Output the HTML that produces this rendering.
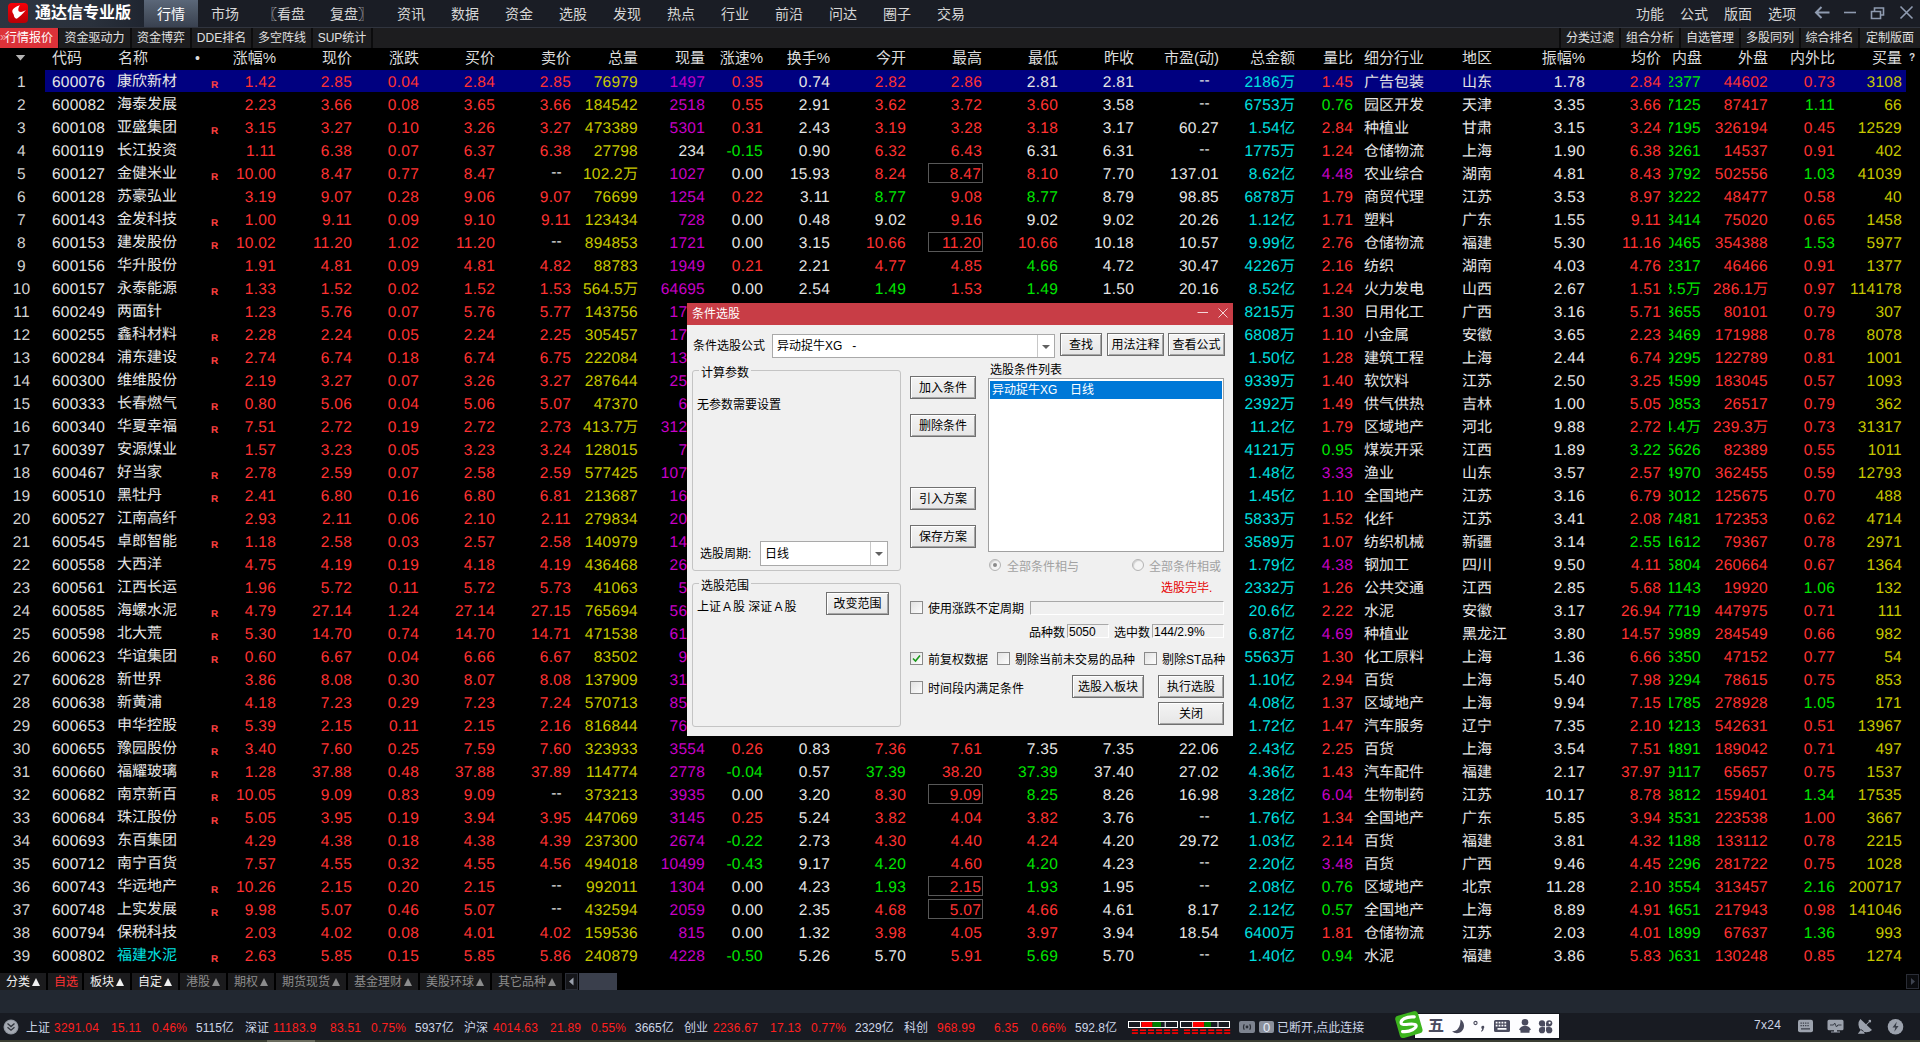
<!DOCTYPE html>
<html lang="zh-CN">
<head>
<meta charset="utf-8">
<title>通达信专业版</title>
<style>
html,body{margin:0;padding:0;background:#000;}
body{width:1920px;height:1042px;position:relative;overflow:hidden;font-family:"Liberation Sans","Noto Sans CJK SC",sans-serif;color:#e6e6e6;}
i,b{font-style:normal;font-weight:normal}
.abs{position:absolute}
/* ---------- top bar ---------- */
#top{position:absolute;left:0;top:0;width:1920px;height:27px;background:linear-gradient(90deg,#2d3440 0,#2a313c 90px,#1f2530 144px,#1a1d25 200px,#1a1d25 100%);border-bottom:1px solid #30343e;}
#top .act{position:absolute;left:144px;top:0;width:54px;height:27px;background:linear-gradient(180deg,#5b6779 0,#4a5463 50%,#394150 100%);}
#top .ttl{position:absolute;left:35px;top:0;line-height:25px;font-size:16px;font-weight:bold;color:#fff;letter-spacing:0px}
#top .mi{position:absolute;top:0;line-height:28px;font-size:14px;color:#d6d6d6;white-space:nowrap}
#logo{position:absolute;left:8px;top:3px;width:20px;height:20px}
/* ---------- second bar ---------- */
#bar2{position:absolute;left:0;top:28px;width:1920px;height:20px;background:#1d1d1f;}
#bar2 i{position:absolute;top:0;height:20px;line-height:21px;font-size:12px;color:#e0e0e0;text-align:center;white-space:nowrap;border-right:2px solid #0c0c0d;box-sizing:border-box}
#bar2 i.on{background:#dc3239;color:#fff;border-right:none}
/* ---------- header ---------- */
#hd{position:absolute;left:0;top:48px;width:1920px;height:22px;background:#000}
#hd i{position:absolute;top:0;line-height:20px;font-size:15px;color:#dcdcdc;white-space:nowrap}
/* ---------- rows ---------- */
.row{position:absolute;left:0;width:1920px;height:23px;line-height:23px;font-size:15.5px;letter-spacing:.25px;text-rendering:geometricPrecision;white-space:nowrap}
.row.sel:before{content:"";position:absolute;left:45px;top:0;width:1861px;height:22px;background:#000080}
.row>i{position:absolute;top:1px}
.row b{font-size:15px;letter-spacing:0}
.ix{left:0;width:43px;text-align:center;color:#d2d2d2}
.cd{left:52px;color:#e6e6e6}
.nm{left:117px;top:0 !important;font-size:15px;letter-spacing:0;color:#e6e6e6}
.nm.cy{color:#00e0e0}
.R{left:211px;font-size:10px;font-weight:bold;color:#ff4040;top:4px !important}
.hy{left:1364px;font-size:15px;letter-spacing:0;color:#e6e6e6}
.dq{left:1462px;font-size:15px;letter-spacing:0;color:#e6e6e6}
.np{left:1669px;width:32px;height:23px;overflow:hidden;top:0 !important}
.np>i{position:absolute;right:0;top:1px}
.bx{left:928px;top:1px !important;width:53px;height:18px;border:1px solid #585858}
.bx+.zg{margin-right:1px}
.dd{margin-right:9px;top:-1px !important}
.r{color:#ff3232}.g{color:#00e600}.y{color:#c8c800}.m{color:#c800c8}.c{color:#00e0e0}.w{color:#e6e6e6}

/* window controls */
#wc{position:absolute;left:1810px;top:0;width:110px;height:27px}
/* bottom tabs */
#bt{position:absolute;left:0;top:973px;width:1920px;height:17px;background:#000}
#bt i{position:absolute;top:0;height:17px;line-height:19px;font-size:12px;color:#f0f0f0;background:#1b1b1d;white-space:nowrap;box-sizing:border-box;padding-left:6px;overflow:hidden}
#bt i.d{color:#8c8c8c}
#bt i.s{color:#ff3232}
#bt i u{text-decoration:none;display:inline-block;width:0;height:0;border-left:4.5px solid transparent;border-right:4.5px solid transparent;border-bottom:8px solid currentColor;margin-left:2px;vertical-align:0px}
#band{position:absolute;left:0;top:990px;width:1920px;height:23px;background:#222831}
#sb{position:absolute;left:0;top:1013px;width:1920px;height:27px;background:#181b22}
#sb i{position:absolute;top:0;line-height:31px;font-size:12px;white-space:nowrap;color:#ccd6e8}
#sb i.r{color:#ff2020;letter-spacing:.25px}
#foot{position:absolute;left:0;top:1040px;width:1920px;height:2px;background:#3b3f33}
/* dialog */
#dlg{position:absolute;left:687px;top:303px;width:546px;height:433px;background:#f0f0f0;font-size:12px;color:#000;font-family:"Liberation Sans","Noto Sans CJK SC",sans-serif}
#dlg .tb{position:absolute;left:0;top:0;width:546px;height:22px;background:#c83d46}
#dlg .tb span{position:absolute;left:5px;top:0;line-height:23px;color:#fff;font-size:12px}
#dlg .t{position:absolute;line-height:16px;white-space:nowrap;margin-top:1px}
#dlg .btn{position:absolute;box-sizing:border-box;height:23px;line-height:22px;text-align:center;background:linear-gradient(#f4f4f4,#e6e6e6);border:1px solid #707070;box-shadow:inset 1px 1px 0 #fff,inset -1px -1px 0 #a6a6a6;white-space:nowrap}
#dlg .cb{position:absolute;box-sizing:border-box;background:#fff;border:1px solid #a9a9a9;line-height:23px;padding-left:4px;white-space:nowrap}
#dlg .cb:after{content:"";position:absolute;right:0;top:0;width:16px;height:100%;border-left:1px solid #c8c8c8}
#dlg .cb:before{content:"";position:absolute;right:4px;top:10px;border-left:4px solid transparent;border-right:4px solid transparent;border-top:4px solid #606060}
#dlg .gb{position:absolute;box-sizing:border-box;border:1px solid #c4c4c4;border-radius:3px}
#dlg .gb span{position:absolute;left:6px;top:-6px;background:#f0f0f0;padding:0 2px;line-height:16px}
#dlg .ck{position:absolute;box-sizing:border-box;width:13px;height:13px;border:1px solid #8a8a8a;background:linear-gradient(135deg,#e2e2e2,#fdfdfd)}
#dlg .sk{position:absolute;box-sizing:border-box;height:14px;line-height:15px;border:1px solid;border-color:#a8a8a8 #fff #fff #a8a8a8;padding-left:1px;white-space:nowrap}
#dlg .rd{position:absolute;box-sizing:border-box;width:12px;height:12px;border-radius:50%;border:1px solid #b4b4b4;background:#f4f4f4;box-shadow:inset 1px 1px 1px #d0d0d0}
.zf{right:1644px}.xj{right:1568px}.zd{right:1501px}.mj{right:1425px}.sj{right:1349px}.zl{right:1282px}.xl{right:1215px}.zs{right:1157px}.hs{right:1090px}.jk{right:1014px}.zg{right:938px}.zdi{right:862px}.zsou{right:786px}.sy{right:701px}.je{right:625px}.lb{right:567px}.zfu{right:335px}.jj{right:259px}.wp{right:152px}.nwb{right:85px}.ml{right:18px}
</style>
</head>
<body>
<div id="top">
<div class="act"></div>
<div id="logo" style="border-radius:4px;background:linear-gradient(180deg,#f80008,#b80006)"><svg width="20" height="20" viewBox="0 0 20 20" style="position:absolute;left:0;top:0"><path d="M11.900 2.200 C8 3.500 4.500 5.500 4.300 8 C4.200 10 5.500 10.500 5.800 12 C6 13.500 6.500 15.500 8.800 15.800 C11 14.500 15 11 17.900 7.100 C15.500 8.800 12.500 9.500 10.700 8.300 C9.800 6.500 10.500 4 11.900 2.200 Z" fill="#fff"/></svg></div>
<span class="ttl">通达信专业版</span>
<span class="mi" style="left:157px;color:#fff">行情</span>
<span class="mi" style="left:211px">市场</span>
<span class="mi" style="left:263px">〖看盘</span>
<span class="mi" style="left:330px">复盘〗</span>
<span class="mi" style="left:397px">资讯</span>
<span class="mi" style="left:451px">数据</span>
<span class="mi" style="left:505px">资金</span>
<span class="mi" style="left:559px">选股</span>
<span class="mi" style="left:613px">发现</span>
<span class="mi" style="left:667px">热点</span>
<span class="mi" style="left:721px">行业</span>
<span class="mi" style="left:775px">前沿</span>
<span class="mi" style="left:829px">问达</span>
<span class="mi" style="left:883px">圈子</span>
<span class="mi" style="left:937px">交易</span>
<span class="mi" style="left:1636px">功能</span>
<span class="mi" style="left:1680px">公式</span>
<span class="mi" style="left:1724px">版面</span>
<span class="mi" style="left:1768px">选项</span>
<svg id="wc" width="110" height="27" viewBox="0 0 110 27"><g stroke="#8f9bb0" stroke-width="1.6" fill="none"><path d="M6 12.5H19.5M11.500 7L6 12.500L11.500 18" stroke-width="2"/><path d="M34 12.5H46"/><path d="M61.5 11.5h9v7h-9z M64.5 11.5v-3.5h9v7h-3"/><path d="M90.5 6.5L102.5 18.5M102.5 6.5L90.5 18.5"/></g></svg>
</div>
<div id="bar2">
<i class="on" style="left:0;width:58px;text-align:left;padding-left:5px"><b style="position:absolute;left:0;top:-1px;font-size:12px;color:#f4a0a4">»</b>行情报价</i>
<i style="left:58px;width:74px;border-left:1px solid #0c0c0d">资金驱动力</i>
<i style="left:132px;width:60px">资金博弈</i>
<i style="left:192px;width:61px">DDE排名</i>
<i style="left:253px;width:60px">多空阵线</i>
<i style="left:313px;width:60px">SUP统计</i>
<i style="left:1559px;width:62px;border-left:2px solid #0c0c0d">分类过滤</i>
<i style="left:1621px;width:60px">组合分析</i>
<i style="left:1681px;width:60px">自选管理</i>
<i style="left:1741px;width:60px">多股同列</i>
<i style="left:1801px;width:59px">综合排名</i>
<i style="left:1860px;width:60px;border-right:none">定制版面</i>
</div>
<div id="hd"><svg width="12" height="8" viewBox="0 0 12 8" style="position:absolute;left:15px;top:6px"><path d="M.8 1H10.200L5.500 6.400Z" fill="#b4b4b4"/></svg><i style="left:195px;font-size:14px">•</i><i style="left:1909px;font-size:10px;font-weight:bold">?</i><i style="left:52px">代码</i><i style="left:118px">名称</i><i style="right:1644px">涨幅%</i><i style="right:1568px">现价</i><i style="right:1501px">涨跌</i><i style="right:1425px">买价</i><i style="right:1349px">卖价</i><i style="right:1282px">总量</i><i style="right:1215px">现量</i><i style="right:1157px">涨速%</i><i style="right:1090px">换手%</i><i style="right:1014px">今开</i><i style="right:938px">最高</i><i style="right:862px">最低</i><i style="right:786px">昨收</i><i style="right:701px">市盈(动)</i><i style="right:625px">总金额</i><i style="right:567px">量比</i><i style="left:1364px">细分行业</i><i style="left:1462px">地区</i><i style="right:335px">振幅%</i><i style="right:259px">均价</i><i style="right:218px">内盘</i><i style="right:152px">外盘</i><i style="right:85px">内外比</i><i style="right:18px">买量</i></div>
<div class="row sel" style="top:70px"><i class="ix">1</i><i class="cd">600076</i><i class="nm">康欣新材</i><i class="R">R</i><i class="n zf r">1.42</i><i class="n xj r">2.85</i><i class="n zd r">0.04</i><i class="n mj r">2.84</i><i class="n sj r">2.85</i><i class="n zl y">76979</i><i class="n xl m">1497</i><i class="n zs r">0.35</i><i class="n hs w">0.74</i><i class="n jk r">2.82</i><i class="n zg r">2.86</i><i class="n zdi w">2.81</i><i class="n zsou w">2.81</i><i class="n sy w dd">--</i><i class="n je c">2186<b>万</b></i><i class="n lb r">1.45</i><i class="hy">广告包装</i><i class="dq">山东</i><i class="n zfu w">1.78</i><i class="n jj r">2.84</i><i class="np"><i class="n g">32377</i></i><i class="n wp r">44602</i><i class="n nwb r">0.73</i><i class="n ml y">3108</i></div>
<div class="row" style="top:93px"><i class="ix">2</i><i class="cd">600082</i><i class="nm">海泰发展</i><i class="n zf r">2.23</i><i class="n xj r">3.66</i><i class="n zd r">0.08</i><i class="n mj r">3.65</i><i class="n sj r">3.66</i><i class="n zl y">184542</i><i class="n xl m">2518</i><i class="n zs r">0.55</i><i class="n hs w">2.91</i><i class="n jk r">3.62</i><i class="n zg r">3.72</i><i class="n zdi r">3.60</i><i class="n zsou w">3.58</i><i class="n sy w dd">--</i><i class="n je c">6753<b>万</b></i><i class="n lb g">0.76</i><i class="hy">园区开发</i><i class="dq">天津</i><i class="n zfu w">3.35</i><i class="n jj r">3.66</i><i class="np"><i class="n g">97125</i></i><i class="n wp r">87417</i><i class="n nwb g">1.11</i><i class="n ml y">66</i></div>
<div class="row" style="top:116px"><i class="ix">3</i><i class="cd">600108</i><i class="nm">亚盛集团</i><i class="R">R</i><i class="n zf r">3.15</i><i class="n xj r">3.27</i><i class="n zd r">0.10</i><i class="n mj r">3.26</i><i class="n sj r">3.27</i><i class="n zl y">473389</i><i class="n xl m">5301</i><i class="n zs r">0.31</i><i class="n hs w">2.43</i><i class="n jk r">3.19</i><i class="n zg r">3.28</i><i class="n zdi r">3.18</i><i class="n zsou w">3.17</i><i class="n sy w">60.27</i><i class="n je c">1.54<b>亿</b></i><i class="n lb r">2.84</i><i class="hy">种植业</i><i class="dq">甘肃</i><i class="n zfu w">3.15</i><i class="n jj r">3.24</i><i class="np"><i class="n g">147195</i></i><i class="n wp r">326194</i><i class="n nwb r">0.45</i><i class="n ml y">12529</i></div>
<div class="row" style="top:139px"><i class="ix">4</i><i class="cd">600119</i><i class="nm">长江投资</i><i class="n zf r">1.11</i><i class="n xj r">6.38</i><i class="n zd r">0.07</i><i class="n mj r">6.37</i><i class="n sj r">6.38</i><i class="n zl y">27798</i><i class="n xl w">234</i><i class="n zs g">-0.15</i><i class="n hs w">0.90</i><i class="n jk r">6.32</i><i class="n zg r">6.43</i><i class="n zdi w">6.31</i><i class="n zsou w">6.31</i><i class="n sy w dd">--</i><i class="n je c">1775<b>万</b></i><i class="n lb r">1.24</i><i class="hy">仓储物流</i><i class="dq">上海</i><i class="n zfu w">1.90</i><i class="n jj r">6.38</i><i class="np"><i class="n g">13261</i></i><i class="n wp r">14537</i><i class="n nwb r">0.91</i><i class="n ml y">402</i></div>
<div class="row" style="top:162px"><i class="ix">5</i><i class="cd">600127</i><i class="nm">金健米业</i><i class="R">R</i><i class="n zf r">10.00</i><i class="n xj r">8.47</i><i class="n zd r">0.77</i><i class="n mj r">8.47</i><i class="n sj w dd">--</i><i class="n zl y">102.2<b>万</b></i><i class="n xl m">1027</i><i class="n zs w">0.00</i><i class="n hs w">15.93</i><i class="n jk r">8.24</i><i class="bx"></i><i class="n zg r">8.47</i><i class="n zdi r">8.10</i><i class="n zsou w">7.70</i><i class="n sy w">137.01</i><i class="n je c">8.62<b>亿</b></i><i class="n lb m">4.48</i><i class="hy">农业综合</i><i class="dq">湖南</i><i class="n zfu w">4.81</i><i class="n jj r">8.43</i><i class="np"><i class="n g">519792</i></i><i class="n wp r">502556</i><i class="n nwb g">1.03</i><i class="n ml y">41039</i></div>
<div class="row" style="top:185px"><i class="ix">6</i><i class="cd">600128</i><i class="nm">苏豪弘业</i><i class="n zf r">3.19</i><i class="n xj r">9.07</i><i class="n zd r">0.28</i><i class="n mj r">9.06</i><i class="n sj r">9.07</i><i class="n zl y">76699</i><i class="n xl m">1254</i><i class="n zs r">0.22</i><i class="n hs w">3.11</i><i class="n jk g">8.77</i><i class="n zg r">9.08</i><i class="n zdi g">8.77</i><i class="n zsou w">8.79</i><i class="n sy w">98.85</i><i class="n je c">6878<b>万</b></i><i class="n lb r">1.79</i><i class="hy">商贸代理</i><i class="dq">江苏</i><i class="n zfu w">3.53</i><i class="n jj r">8.97</i><i class="np"><i class="n g">28222</i></i><i class="n wp r">48477</i><i class="n nwb r">0.58</i><i class="n ml y">40</i></div>
<div class="row" style="top:208px"><i class="ix">7</i><i class="cd">600143</i><i class="nm">金发科技</i><i class="R">R</i><i class="n zf r">1.00</i><i class="n xj r">9.11</i><i class="n zd r">0.09</i><i class="n mj r">9.10</i><i class="n sj r">9.11</i><i class="n zl y">123434</i><i class="n xl m">728</i><i class="n zs w">0.00</i><i class="n hs w">0.48</i><i class="n jk w">9.02</i><i class="n zg r">9.16</i><i class="n zdi w">9.02</i><i class="n zsou w">9.02</i><i class="n sy w">20.26</i><i class="n je c">1.12<b>亿</b></i><i class="n lb r">1.71</i><i class="hy">塑料</i><i class="dq">广东</i><i class="n zfu w">1.55</i><i class="n jj r">9.11</i><i class="np"><i class="n g">48414</i></i><i class="n wp r">75020</i><i class="n nwb r">0.65</i><i class="n ml y">1458</i></div>
<div class="row" style="top:231px"><i class="ix">8</i><i class="cd">600153</i><i class="nm">建发股份</i><i class="R">R</i><i class="n zf r">10.02</i><i class="n xj r">11.20</i><i class="n zd r">1.02</i><i class="n mj r">11.20</i><i class="n sj w dd">--</i><i class="n zl y">894853</i><i class="n xl m">1721</i><i class="n zs w">0.00</i><i class="n hs w">3.15</i><i class="n jk r">10.66</i><i class="bx"></i><i class="n zg r">11.20</i><i class="n zdi r">10.66</i><i class="n zsou w">10.18</i><i class="n sy w">10.57</i><i class="n je c">9.99<b>亿</b></i><i class="n lb r">2.76</i><i class="hy">仓储物流</i><i class="dq">福建</i><i class="n zfu w">5.30</i><i class="n jj r">11.16</i><i class="np"><i class="n g">540465</i></i><i class="n wp r">354388</i><i class="n nwb g">1.53</i><i class="n ml y">5977</i></div>
<div class="row" style="top:254px"><i class="ix">9</i><i class="cd">600156</i><i class="nm">华升股份</i><i class="n zf r">1.91</i><i class="n xj r">4.81</i><i class="n zd r">0.09</i><i class="n mj r">4.81</i><i class="n sj r">4.82</i><i class="n zl y">88783</i><i class="n xl m">1949</i><i class="n zs r">0.21</i><i class="n hs w">2.21</i><i class="n jk r">4.77</i><i class="n zg r">4.85</i><i class="n zdi g">4.66</i><i class="n zsou w">4.72</i><i class="n sy w">30.47</i><i class="n je c">4226<b>万</b></i><i class="n lb r">2.16</i><i class="hy">纺织</i><i class="dq">湖南</i><i class="n zfu w">4.03</i><i class="n jj r">4.76</i><i class="np"><i class="n g">42317</i></i><i class="n wp r">46466</i><i class="n nwb r">0.91</i><i class="n ml y">1377</i></div>
<div class="row" style="top:277px"><i class="ix">10</i><i class="cd">600157</i><i class="nm">永泰能源</i><i class="R">R</i><i class="n zf r">1.33</i><i class="n xj r">1.52</i><i class="n zd r">0.02</i><i class="n mj r">1.52</i><i class="n sj r">1.53</i><i class="n zl y">564.5<b>万</b></i><i class="n xl m">64695</i><i class="n zs w">0.00</i><i class="n hs w">2.54</i><i class="n jk g">1.49</i><i class="n zg r">1.53</i><i class="n zdi g">1.49</i><i class="n zsou w">1.50</i><i class="n sy w">20.16</i><i class="n je c">8.52<b>亿</b></i><i class="n lb r">1.24</i><i class="hy">火力发电</i><i class="dq">山西</i><i class="n zfu w">2.67</i><i class="n jj r">1.51</i><i class="np"><i class="n g">278.5<b>万</b></i></i><i class="n wp r">286.1<b>万</b></i><i class="n nwb r">0.97</i><i class="n ml y">114178</i></div>
<div class="row" style="top:300px"><i class="ix">11</i><i class="cd">600249</i><i class="nm">两面针</i><i class="n zf r">1.23</i><i class="n xj r">5.76</i><i class="n zd r">0.07</i><i class="n mj r">5.76</i><i class="n sj r">5.77</i><i class="n zl y">143756</i><i class="n xl m">1725</i><i class="n zs r">0.17</i><i class="n hs w">3.16</i><i class="n jk r">5.70</i><i class="n zg r">5.80</i><i class="n zdi g">5.62</i><i class="n zsou w">5.69</i><i class="n sy w dd">--</i><i class="n je c">8215<b>万</b></i><i class="n lb r">1.30</i><i class="hy">日用化工</i><i class="dq">广西</i><i class="n zfu w">3.16</i><i class="n jj r">5.71</i><i class="np"><i class="n g">63655</i></i><i class="n wp r">80101</i><i class="n nwb r">0.79</i><i class="n ml y">307</i></div>
<div class="row" style="top:323px"><i class="ix">12</i><i class="cd">600255</i><i class="nm">鑫科材料</i><i class="R">R</i><i class="n zf r">2.28</i><i class="n xj r">2.24</i><i class="n zd r">0.05</i><i class="n mj r">2.24</i><i class="n sj r">2.25</i><i class="n zl y">305457</i><i class="n xl m">1734</i><i class="n zs w">0.00</i><i class="n hs w">1.70</i><i class="n jk w">2.19</i><i class="n zg r">2.26</i><i class="n zdi g">2.18</i><i class="n zsou w">2.19</i><i class="n sy w dd">--</i><i class="n je c">6808<b>万</b></i><i class="n lb r">1.10</i><i class="hy">小金属</i><i class="dq">安徽</i><i class="n zfu w">3.65</i><i class="n jj r">2.23</i><i class="np"><i class="n g">133469</i></i><i class="n wp r">171988</i><i class="n nwb r">0.78</i><i class="n ml y">8078</i></div>
<div class="row" style="top:346px"><i class="ix">13</i><i class="cd">600284</i><i class="nm">浦东建设</i><i class="R">R</i><i class="n zf r">2.74</i><i class="n xj r">6.74</i><i class="n zd r">0.18</i><i class="n mj r">6.74</i><i class="n sj r">6.75</i><i class="n zl y">222084</i><i class="n xl m">1308</i><i class="n zs r">0.15</i><i class="n hs w">2.29</i><i class="n jk r">6.58</i><i class="n zg r">6.74</i><i class="n zdi r">6.58</i><i class="n zsou w">6.56</i><i class="n sy w">12.01</i><i class="n je c">1.50<b>亿</b></i><i class="n lb r">1.28</i><i class="hy">建筑工程</i><i class="dq">上海</i><i class="n zfu w">2.44</i><i class="n jj r">6.74</i><i class="np"><i class="n g">99295</i></i><i class="n wp r">122789</i><i class="n nwb r">0.81</i><i class="n ml y">1001</i></div>
<div class="row" style="top:369px"><i class="ix">14</i><i class="cd">600300</i><i class="nm">维维股份</i><i class="n zf r">2.19</i><i class="n xj r">3.27</i><i class="n zd r">0.07</i><i class="n mj r">3.26</i><i class="n sj r">3.27</i><i class="n zl y">287644</i><i class="n xl m">2544</i><i class="n zs w">0.00</i><i class="n hs w">1.78</i><i class="n jk w">3.20</i><i class="n zg r">3.28</i><i class="n zdi w">3.20</i><i class="n zsou w">3.20</i><i class="n sy w">35.10</i><i class="n je c">9339<b>万</b></i><i class="n lb r">1.40</i><i class="hy">软饮料</i><i class="dq">江苏</i><i class="n zfu w">2.50</i><i class="n jj r">3.25</i><i class="np"><i class="n g">104599</i></i><i class="n wp r">183045</i><i class="n nwb r">0.57</i><i class="n ml y">1093</i></div>
<div class="row" style="top:392px"><i class="ix">15</i><i class="cd">600333</i><i class="nm">长春燃气</i><i class="R">R</i><i class="n zf r">0.80</i><i class="n xj r">5.06</i><i class="n zd r">0.04</i><i class="n mj r">5.06</i><i class="n sj r">5.07</i><i class="n zl y">47370</i><i class="n xl m">652</i><i class="n zs w">0.00</i><i class="n hs w">0.78</i><i class="n jk r">5.03</i><i class="n zg r">5.07</i><i class="n zdi w">5.02</i><i class="n zsou w">5.02</i><i class="n sy w dd">--</i><i class="n je c">2392<b>万</b></i><i class="n lb r">1.49</i><i class="hy">供气供热</i><i class="dq">吉林</i><i class="n zfu w">1.00</i><i class="n jj r">5.05</i><i class="np"><i class="n g">20853</i></i><i class="n wp r">26517</i><i class="n nwb r">0.79</i><i class="n ml y">362</i></div>
<div class="row" style="top:415px"><i class="ix">16</i><i class="cd">600340</i><i class="nm">华夏幸福</i><i class="R">R</i><i class="n zf r">7.51</i><i class="n xj r">2.72</i><i class="n zd r">0.19</i><i class="n mj r">2.72</i><i class="n sj r">2.73</i><i class="n zl y">413.7<b>万</b></i><i class="n xl m">31245</i><i class="n zs r">0.37</i><i class="n hs w">10.6</i><i class="n jk g">2.52</i><i class="n zg r">2.77</i><i class="n zdi g">2.52</i><i class="n zsou w">2.53</i><i class="n sy w dd">--</i><i class="n je c">11.2<b>亿</b></i><i class="n lb r">1.79</i><i class="hy">区域地产</i><i class="dq">河北</i><i class="n zfu w">9.88</i><i class="n jj r">2.72</i><i class="np"><i class="n g">174.4<b>万</b></i></i><i class="n wp r">239.3<b>万</b></i><i class="n nwb r">0.73</i><i class="n ml y">31317</i></div>
<div class="row" style="top:438px"><i class="ix">17</i><i class="cd">600397</i><i class="nm">安源煤业</i><i class="n zf r">1.57</i><i class="n xj r">3.23</i><i class="n zd r">0.05</i><i class="n mj r">3.23</i><i class="n sj r">3.24</i><i class="n zl y">128015</i><i class="n xl m">735</i><i class="n zs w">0.00</i><i class="n hs w">1.29</i><i class="n jk w">3.18</i><i class="n zg r">3.24</i><i class="n zdi w">3.18</i><i class="n zsou w">3.18</i><i class="n sy w dd">--</i><i class="n je c">4121<b>万</b></i><i class="n lb g">0.95</i><i class="hy">煤炭开采</i><i class="dq">江西</i><i class="n zfu w">1.89</i><i class="n jj g">3.22</i><i class="np"><i class="n g">45626</i></i><i class="n wp r">82389</i><i class="n nwb r">0.55</i><i class="n ml y">1011</i></div>
<div class="row" style="top:461px"><i class="ix">18</i><i class="cd">600467</i><i class="nm">好当家</i><i class="R">R</i><i class="n zf r">2.78</i><i class="n xj r">2.59</i><i class="n zd r">0.07</i><i class="n mj r">2.58</i><i class="n sj r">2.59</i><i class="n zl y">577425</i><i class="n xl m">10712</i><i class="n zs r">0.39</i><i class="n hs w">3.95</i><i class="n jk w">2.52</i><i class="n zg r">2.61</i><i class="n zdi w">2.52</i><i class="n zsou w">2.52</i><i class="n sy w">75.20</i><i class="n je c">1.48<b>亿</b></i><i class="n lb m">3.33</i><i class="hy">渔业</i><i class="dq">山东</i><i class="n zfu w">3.57</i><i class="n jj r">2.57</i><i class="np"><i class="n g">214970</i></i><i class="n wp r">362455</i><i class="n nwb r">0.59</i><i class="n ml y">12793</i></div>
<div class="row" style="top:484px"><i class="ix">19</i><i class="cd">600510</i><i class="nm">黑牡丹</i><i class="R">R</i><i class="n zf r">2.41</i><i class="n xj r">6.80</i><i class="n zd r">0.16</i><i class="n mj r">6.80</i><i class="n sj r">6.81</i><i class="n zl y">213687</i><i class="n xl m">1622</i><i class="n zs r">0.15</i><i class="n hs w">2.04</i><i class="n jk w">6.64</i><i class="n zg r">6.85</i><i class="n zdi w">6.64</i><i class="n zsou w">6.64</i><i class="n sy w">9.54</i><i class="n je c">1.45<b>亿</b></i><i class="n lb r">1.10</i><i class="hy">全国地产</i><i class="dq">江苏</i><i class="n zfu w">3.16</i><i class="n jj r">6.79</i><i class="np"><i class="n g">88012</i></i><i class="n wp r">125675</i><i class="n nwb r">0.70</i><i class="n ml y">488</i></div>
<div class="row" style="top:507px"><i class="ix">20</i><i class="cd">600527</i><i class="nm">江南高纤</i><i class="n zf r">2.93</i><i class="n xj r">2.11</i><i class="n zd r">0.06</i><i class="n mj r">2.10</i><i class="n sj r">2.11</i><i class="n zl y">279834</i><i class="n xl m">2035</i><i class="n zs w">0.00</i><i class="n hs w">1.62</i><i class="n jk w">2.05</i><i class="n zg r">2.12</i><i class="n zdi w">2.05</i><i class="n zsou w">2.05</i><i class="n sy w dd">--</i><i class="n je c">5833<b>万</b></i><i class="n lb r">1.52</i><i class="hy">化纤</i><i class="dq">江苏</i><i class="n zfu w">3.41</i><i class="n jj r">2.08</i><i class="np"><i class="n g">107481</i></i><i class="n wp r">172353</i><i class="n nwb r">0.62</i><i class="n ml y">4714</i></div>
<div class="row" style="top:530px"><i class="ix">21</i><i class="cd">600545</i><i class="nm">卓郎智能</i><i class="R">R</i><i class="n zf r">1.18</i><i class="n xj r">2.58</i><i class="n zd r">0.03</i><i class="n mj r">2.57</i><i class="n sj r">2.58</i><i class="n zl y">140979</i><i class="n xl m">1410</i><i class="n zs w">0.00</i><i class="n hs w">0.74</i><i class="n jk w">2.55</i><i class="n zg r">2.59</i><i class="n zdi g">2.51</i><i class="n zsou w">2.55</i><i class="n sy w dd">--</i><i class="n je c">3589<b>万</b></i><i class="n lb r">1.07</i><i class="hy">纺织机械</i><i class="dq">新疆</i><i class="n zfu w">3.14</i><i class="n jj g">2.55</i><i class="np"><i class="n g">61612</i></i><i class="n wp r">79367</i><i class="n nwb r">0.78</i><i class="n ml y">2971</i></div>
<div class="row" style="top:553px"><i class="ix">22</i><i class="cd">600558</i><i class="nm">大西洋</i><i class="n zf r">4.75</i><i class="n xj r">4.19</i><i class="n zd r">0.19</i><i class="n mj r">4.18</i><i class="n sj r">4.19</i><i class="n zl y">436468</i><i class="n xl m">2680</i><i class="n zs r">0.24</i><i class="n hs w">4.86</i><i class="n jk w">4.00</i><i class="n zg r">4.30</i><i class="n zdi g">3.92</i><i class="n zsou w">4.00</i><i class="n sy w dd">--</i><i class="n je c">1.79<b>亿</b></i><i class="n lb m">4.38</i><i class="hy">钢加工</i><i class="dq">四川</i><i class="n zfu w">9.50</i><i class="n jj r">4.11</i><i class="np"><i class="n g">175804</i></i><i class="n wp r">260664</i><i class="n nwb r">0.67</i><i class="n ml y">1364</i></div>
<div class="row" style="top:576px"><i class="ix">23</i><i class="cd">600561</i><i class="nm">江西长运</i><i class="n zf r">1.96</i><i class="n xj r">5.72</i><i class="n zd r">0.11</i><i class="n mj r">5.72</i><i class="n sj r">5.73</i><i class="n zl y">41063</i><i class="n xl m">512</i><i class="n zs w">0.00</i><i class="n hs w">1.73</i><i class="n jk w">5.61</i><i class="n zg r">5.75</i><i class="n zdi g">5.59</i><i class="n zsou w">5.61</i><i class="n sy w dd">--</i><i class="n je c">2332<b>万</b></i><i class="n lb r">1.26</i><i class="hy">公共交通</i><i class="dq">江西</i><i class="n zfu w">2.85</i><i class="n jj r">5.68</i><i class="np"><i class="n g">21143</i></i><i class="n wp r">19920</i><i class="n nwb g">1.06</i><i class="n ml y">132</i></div>
<div class="row" style="top:599px"><i class="ix">24</i><i class="cd">600585</i><i class="nm">海螺水泥</i><i class="R">R</i><i class="n zf r">4.79</i><i class="n xj r">27.14</i><i class="n zd r">1.24</i><i class="n mj r">27.14</i><i class="n sj r">27.15</i><i class="n zl y">765694</i><i class="n xl m">5621</i><i class="n zs r">0.07</i><i class="n hs w">1.91</i><i class="n jk r">26.20</i><i class="n zg r">27.20</i><i class="n zdi r">26.38</i><i class="n zsou w">25.90</i><i class="n sy w">18.40</i><i class="n je c">20.6<b>亿</b></i><i class="n lb r">2.22</i><i class="hy">水泥</i><i class="dq">安徽</i><i class="n zfu w">3.17</i><i class="n jj r">26.94</i><i class="np"><i class="n g">317719</i></i><i class="n wp r">447975</i><i class="n nwb r">0.71</i><i class="n ml y">111</i></div>
<div class="row" style="top:622px"><i class="ix">25</i><i class="cd">600598</i><i class="nm">北大荒</i><i class="R">R</i><i class="n zf r">5.30</i><i class="n xj r">14.70</i><i class="n zd r">0.74</i><i class="n mj r">14.70</i><i class="n sj r">14.71</i><i class="n zl y">471538</i><i class="n xl m">6154</i><i class="n zs r">0.14</i><i class="n hs w">2.65</i><i class="n jk r">14.20</i><i class="n zg r">14.75</i><i class="n zdi r">14.22</i><i class="n zsou w">13.96</i><i class="n sy w">24.11</i><i class="n je c">6.87<b>亿</b></i><i class="n lb m">4.69</i><i class="hy">种植业</i><i class="dq">黑龙江</i><i class="n zfu w">3.80</i><i class="n jj r">14.57</i><i class="np"><i class="n g">186989</i></i><i class="n wp r">284549</i><i class="n nwb r">0.66</i><i class="n ml y">982</i></div>
<div class="row" style="top:645px"><i class="ix">26</i><i class="cd">600623</i><i class="nm">华谊集团</i><i class="R">R</i><i class="n zf r">0.60</i><i class="n xj r">6.67</i><i class="n zd r">0.04</i><i class="n mj r">6.66</i><i class="n sj r">6.67</i><i class="n zl y">83502</i><i class="n xl m">934</i><i class="n zs w">0.00</i><i class="n hs w">0.45</i><i class="n jk w">6.63</i><i class="n zg r">6.70</i><i class="n zdi g">6.61</i><i class="n zsou w">6.63</i><i class="n sy w">14.03</i><i class="n je c">5563<b>万</b></i><i class="n lb r">1.30</i><i class="hy">化工原料</i><i class="dq">上海</i><i class="n zfu w">1.36</i><i class="n jj r">6.66</i><i class="np"><i class="n g">36350</i></i><i class="n wp r">47152</i><i class="n nwb r">0.77</i><i class="n ml y">54</i></div>
<div class="row" style="top:668px"><i class="ix">27</i><i class="cd">600628</i><i class="nm">新世界</i><i class="n zf r">3.86</i><i class="n xj r">8.08</i><i class="n zd r">0.30</i><i class="n mj r">8.07</i><i class="n sj r">8.08</i><i class="n zl y">137909</i><i class="n xl m">3120</i><i class="n zs r">0.12</i><i class="n hs w">2.13</i><i class="n jk w">7.78</i><i class="n zg r">8.18</i><i class="n zdi g">7.76</i><i class="n zsou w">7.78</i><i class="n sy w dd">--</i><i class="n je c">1.10<b>亿</b></i><i class="n lb r">2.94</i><i class="hy">百货</i><i class="dq">上海</i><i class="n zfu w">5.40</i><i class="n jj r">7.98</i><i class="np"><i class="n g">59294</i></i><i class="n wp r">78615</i><i class="n nwb r">0.75</i><i class="n ml y">853</i></div>
<div class="row" style="top:691px"><i class="ix">28</i><i class="cd">600638</i><i class="nm">新黄浦</i><i class="n zf r">4.18</i><i class="n xj r">7.23</i><i class="n zd r">0.29</i><i class="n mj r">7.23</i><i class="n sj r">7.24</i><i class="n zl y">570713</i><i class="n xl m">8532</i><i class="n zs r">0.28</i><i class="n hs w">8.48</i><i class="n jk g">6.90</i><i class="n zg r">7.48</i><i class="n zdi g">6.79</i><i class="n zsou w">6.94</i><i class="n sy w dd">--</i><i class="n je c">4.08<b>亿</b></i><i class="n lb r">1.37</i><i class="hy">区域地产</i><i class="dq">上海</i><i class="n zfu w">9.94</i><i class="n jj r">7.15</i><i class="np"><i class="n g">291785</i></i><i class="n wp r">278928</i><i class="n nwb g">1.05</i><i class="n ml y">171</i></div>
<div class="row" style="top:714px"><i class="ix">29</i><i class="cd">600653</i><i class="nm">申华控股</i><i class="R">R</i><i class="n zf r">5.39</i><i class="n xj r">2.15</i><i class="n zd r">0.11</i><i class="n mj r">2.15</i><i class="n sj r">2.16</i><i class="n zl y">816844</i><i class="n xl m">7640</i><i class="n zs w">0.00</i><i class="n hs w">4.20</i><i class="n jk w">2.04</i><i class="n zg r">2.18</i><i class="n zdi g">2.03</i><i class="n zsou w">2.04</i><i class="n sy w dd">--</i><i class="n je c">1.72<b>亿</b></i><i class="n lb r">1.47</i><i class="hy">汽车服务</i><i class="dq">辽宁</i><i class="n zfu w">7.35</i><i class="n jj r">2.10</i><i class="np"><i class="n g">274213</i></i><i class="n wp r">542631</i><i class="n nwb r">0.51</i><i class="n ml y">13967</i></div>
<div class="row" style="top:737px"><i class="ix">30</i><i class="cd">600655</i><i class="nm">豫园股份</i><i class="R">R</i><i class="n zf r">3.40</i><i class="n xj r">7.60</i><i class="n zd r">0.25</i><i class="n mj r">7.59</i><i class="n sj r">7.60</i><i class="n zl y">323933</i><i class="n xl m">3554</i><i class="n zs r">0.26</i><i class="n hs w">0.83</i><i class="n jk r">7.36</i><i class="n zg r">7.61</i><i class="n zdi w">7.35</i><i class="n zsou w">7.35</i><i class="n sy w">22.06</i><i class="n je c">2.43<b>亿</b></i><i class="n lb r">2.25</i><i class="hy">百货</i><i class="dq">上海</i><i class="n zfu w">3.54</i><i class="n jj r">7.51</i><i class="np"><i class="n g">134891</i></i><i class="n wp r">189042</i><i class="n nwb r">0.71</i><i class="n ml y">497</i></div>
<div class="row" style="top:760px"><i class="ix">31</i><i class="cd">600660</i><i class="nm">福耀玻璃</i><i class="R">R</i><i class="n zf r">1.28</i><i class="n xj r">37.88</i><i class="n zd r">0.48</i><i class="n mj r">37.88</i><i class="n sj r">37.89</i><i class="n zl y">114774</i><i class="n xl m">2778</i><i class="n zs g">-0.04</i><i class="n hs w">0.57</i><i class="n jk g">37.39</i><i class="n zg r">38.20</i><i class="n zdi g">37.39</i><i class="n zsou w">37.40</i><i class="n sy w">27.02</i><i class="n je c">4.36<b>亿</b></i><i class="n lb r">1.43</i><i class="hy">汽车配件</i><i class="dq">福建</i><i class="n zfu w">2.17</i><i class="n jj r">37.97</i><i class="np"><i class="n g">49117</i></i><i class="n wp r">65657</i><i class="n nwb r">0.75</i><i class="n ml y">1537</i></div>
<div class="row" style="top:783px"><i class="ix">32</i><i class="cd">600682</i><i class="nm">南京新百</i><i class="R">R</i><i class="n zf r">10.05</i><i class="n xj r">9.09</i><i class="n zd r">0.83</i><i class="n mj r">9.09</i><i class="n sj w dd">--</i><i class="n zl y">373213</i><i class="n xl m">3935</i><i class="n zs w">0.00</i><i class="n hs w">3.20</i><i class="n jk r">8.30</i><i class="bx"></i><i class="n zg r">9.09</i><i class="n zdi g">8.25</i><i class="n zsou w">8.26</i><i class="n sy w">16.98</i><i class="n je c">3.28<b>亿</b></i><i class="n lb m">6.04</i><i class="hy">生物制药</i><i class="dq">江苏</i><i class="n zfu w">10.17</i><i class="n jj r">8.78</i><i class="np"><i class="n g">213812</i></i><i class="n wp r">159401</i><i class="n nwb g">1.34</i><i class="n ml y">17535</i></div>
<div class="row" style="top:806px"><i class="ix">33</i><i class="cd">600684</i><i class="nm">珠江股份</i><i class="R">R</i><i class="n zf r">5.05</i><i class="n xj r">3.95</i><i class="n zd r">0.19</i><i class="n mj r">3.94</i><i class="n sj r">3.95</i><i class="n zl y">447069</i><i class="n xl m">3145</i><i class="n zs r">0.25</i><i class="n hs w">5.24</i><i class="n jk r">3.82</i><i class="n zg r">4.04</i><i class="n zdi r">3.82</i><i class="n zsou w">3.76</i><i class="n sy w dd">--</i><i class="n je c">1.76<b>亿</b></i><i class="n lb r">1.34</i><i class="hy">全国地产</i><i class="dq">广东</i><i class="n zfu w">5.85</i><i class="n jj r">3.94</i><i class="np"><i class="n g">223531</i></i><i class="n wp r">223538</i><i class="n nwb r">1.00</i><i class="n ml y">3667</i></div>
<div class="row" style="top:829px"><i class="ix">34</i><i class="cd">600693</i><i class="nm">东百集团</i><i class="n zf r">4.29</i><i class="n xj r">4.38</i><i class="n zd r">0.18</i><i class="n mj r">4.38</i><i class="n sj r">4.39</i><i class="n zl y">237300</i><i class="n xl m">2674</i><i class="n zs g">-0.22</i><i class="n hs w">2.73</i><i class="n jk r">4.30</i><i class="n zg r">4.40</i><i class="n zdi r">4.24</i><i class="n zsou w">4.20</i><i class="n sy w">29.72</i><i class="n je c">1.03<b>亿</b></i><i class="n lb r">2.14</i><i class="hy">百货</i><i class="dq">福建</i><i class="n zfu w">3.81</i><i class="n jj r">4.32</i><i class="np"><i class="n g">104188</i></i><i class="n wp r">133112</i><i class="n nwb r">0.78</i><i class="n ml y">2215</i></div>
<div class="row" style="top:852px"><i class="ix">35</i><i class="cd">600712</i><i class="nm">南宁百货</i><i class="n zf r">7.57</i><i class="n xj r">4.55</i><i class="n zd r">0.32</i><i class="n mj r">4.55</i><i class="n sj r">4.56</i><i class="n zl y">494018</i><i class="n xl m">10499</i><i class="n zs g">-0.43</i><i class="n hs w">9.17</i><i class="n jk g">4.20</i><i class="n zg r">4.60</i><i class="n zdi g">4.20</i><i class="n zsou w">4.23</i><i class="n sy w dd">--</i><i class="n je c">2.20<b>亿</b></i><i class="n lb m">3.48</i><i class="hy">百货</i><i class="dq">广西</i><i class="n zfu w">9.46</i><i class="n jj r">4.45</i><i class="np"><i class="n g">212296</i></i><i class="n wp r">281722</i><i class="n nwb r">0.75</i><i class="n ml y">1028</i></div>
<div class="row" style="top:875px"><i class="ix">36</i><i class="cd">600743</i><i class="nm">华远地产</i><i class="R">R</i><i class="n zf r">10.26</i><i class="n xj r">2.15</i><i class="n zd r">0.20</i><i class="n mj r">2.15</i><i class="n sj w dd">--</i><i class="n zl y">992011</i><i class="n xl m">1304</i><i class="n zs w">0.00</i><i class="n hs w">4.23</i><i class="n jk g">1.93</i><i class="bx"></i><i class="n zg r">2.15</i><i class="n zdi g">1.93</i><i class="n zsou w">1.95</i><i class="n sy w dd">--</i><i class="n je c">2.08<b>亿</b></i><i class="n lb g">0.76</i><i class="hy">区域地产</i><i class="dq">北京</i><i class="n zfu w">11.28</i><i class="n jj r">2.10</i><i class="np"><i class="n g">678554</i></i><i class="n wp r">313457</i><i class="n nwb g">2.16</i><i class="n ml y">200717</i></div>
<div class="row" style="top:898px"><i class="ix">37</i><i class="cd">600748</i><i class="nm">上实发展</i><i class="R">R</i><i class="n zf r">9.98</i><i class="n xj r">5.07</i><i class="n zd r">0.46</i><i class="n mj r">5.07</i><i class="n sj w dd">--</i><i class="n zl y">432594</i><i class="n xl m">2059</i><i class="n zs w">0.00</i><i class="n hs w">2.35</i><i class="n jk r">4.68</i><i class="bx"></i><i class="n zg r">5.07</i><i class="n zdi r">4.66</i><i class="n zsou w">4.61</i><i class="n sy w">8.17</i><i class="n je c">2.12<b>亿</b></i><i class="n lb g">0.57</i><i class="hy">全国地产</i><i class="dq">上海</i><i class="n zfu w">8.89</i><i class="n jj r">4.91</i><i class="np"><i class="n g">214651</i></i><i class="n wp r">217943</i><i class="n nwb r">0.98</i><i class="n ml y">141046</i></div>
<div class="row" style="top:921px"><i class="ix">38</i><i class="cd">600794</i><i class="nm">保税科技</i><i class="n zf r">2.03</i><i class="n xj r">4.02</i><i class="n zd r">0.08</i><i class="n mj r">4.01</i><i class="n sj r">4.02</i><i class="n zl y">159536</i><i class="n xl m">815</i><i class="n zs w">0.00</i><i class="n hs w">1.32</i><i class="n jk r">3.98</i><i class="n zg r">4.05</i><i class="n zdi r">3.97</i><i class="n zsou w">3.94</i><i class="n sy w">18.54</i><i class="n je c">6400<b>万</b></i><i class="n lb r">1.81</i><i class="hy">仓储物流</i><i class="dq">江苏</i><i class="n zfu w">2.03</i><i class="n jj r">4.01</i><i class="np"><i class="n g">91899</i></i><i class="n wp r">67637</i><i class="n nwb g">1.36</i><i class="n ml y">993</i></div>
<div class="row" style="top:944px"><i class="ix">39</i><i class="cd">600802</i><i class="nm cy">福建水泥</i><i class="R">R</i><i class="n zf r">2.63</i><i class="n xj r">5.85</i><i class="n zd r">0.15</i><i class="n mj r">5.85</i><i class="n sj r">5.86</i><i class="n zl y">240879</i><i class="n xl m">4228</i><i class="n zs g">-0.50</i><i class="n hs w">5.26</i><i class="n jk w">5.70</i><i class="n zg r">5.91</i><i class="n zdi g">5.69</i><i class="n zsou w">5.70</i><i class="n sy w dd">--</i><i class="n je c">1.40<b>亿</b></i><i class="n lb g">0.94</i><i class="hy">水泥</i><i class="dq">福建</i><i class="n zfu w">3.86</i><i class="n jj r">5.83</i><i class="np"><i class="n g">110631</i></i><i class="n wp r">130248</i><i class="n nwb r">0.85</i><i class="n ml y">1274</i></div>
<div id="bt">
<i style="left:0;width:46px">分类<u></u></i>
<i class="s" style="left:48px;width:34px;padding-left:6px">自选</i>
<i style="left:84px;width:46px">板块<u></u></i>
<i style="left:132px;width:46px">自定<u></u></i>
<i class="d" style="left:180px;width:46px">港股<u></u></i>
<i class="d" style="left:228px;width:46px">期权<u></u></i>
<i class="d" style="left:276px;width:70px">期货现货<u></u></i>
<i class="d" style="left:348px;width:70px">基金理财<u></u></i>
<i class="d" style="left:420px;width:70px">美股环球<u></u></i>
<i class="d" style="left:492px;width:70px">其它品种<u></u></i>
<i style="left:565px;width:13px;padding:0;background:#15161a;border:1px solid #2a2d36"><svg width="11" height="15" viewBox="0 0 11 15" style="position:absolute;left:0;top:0"><path d="M7.5 3.5 L3 7.5 L7.5 11.5 Z" fill="#9aa0ac"/></svg></i>
<i style="left:579px;width:38px;padding:0;background:#3a3f4c"></i>
</div>
<div style="position:absolute;left:1906px;top:974px;width:13px;height:15px;box-sizing:border-box;border:1px solid #2a2d36;background:#0a0b0e"><svg width="11" height="13" viewBox="0 0 11 13" style="position:absolute;left:0;top:0"><path d="M4 3 L8 6.500 L4 10 Z" fill="#3e434f"/></svg></div>
<div id="band"></div>
<div id="sb">
<svg width="16" height="16" viewBox="0 0 16 16" style="position:absolute;left:3px;top:6px"><circle cx="8" cy="8" r="7.5" fill="#8d939d"/><circle cx="8" cy="8" r="6.5" fill="#a4a9b2"/><path d="M4.5 4.6 L8 7.6 L11.5 4.6 M4.5 8.2 L8 11.2 L11.5 8.2" stroke="#30343c" stroke-width="1.3" fill="none"/></svg>
<i style="left:26px">上证</i><i class="r" style="left:54px">3291.04</i><i class="r" style="left:111px">15.11</i><i class="r" style="left:152px">0.46%</i><i style="left:196px">5115亿</i>
<i style="left:245px">深证</i><i class="r" style="left:273px">11183.9</i><i class="r" style="left:330px">83.51</i><i class="r" style="left:371px">0.75%</i><i style="left:415px">5937亿</i>
<i style="left:464px">沪深</i><i class="r" style="left:493px">4014.63</i><i class="r" style="left:550px">21.89</i><i class="r" style="left:591px">0.55%</i><i style="left:635px">3665亿</i>
<i style="left:684px">创业</i><i class="r" style="left:713px">2236.67</i><i class="r" style="left:770px">17.13</i><i class="r" style="left:811px">0.77%</i><i style="left:855px">2329亿</i>
<i style="left:904px">科创</i><i class="r" style="left:937px">968.99</i><i class="r" style="left:994px">6.35</i><i class="r" style="left:1031px">0.66%</i><i style="left:1075px">592.8亿</i>
<svg width="104" height="16" viewBox="0 0 104 16" style="position:absolute;left:1128px;top:7px"><rect x="0.5" y="1.5" width="49" height="6" fill="#181b22" stroke="#fff"/><rect x="12" y="2" width="1" height="5" fill="#fff"/><rect x="13.4" y="2" width="11.1" height="5" fill="#f00"/><rect x="24.5" y="2" width="8.5" height="5" fill="#008000"/><rect x="36.7" y="2" width="1" height="5" fill="#fff"/><rect x="3.9" y="9.4" width="6" height="1.6" fill="#f00"/><rect x="3.9" y="12.3" width="6" height="1.6" fill="#f00"/><rect x="12.0" y="9.4" width="6" height="1.6" fill="#f00"/><rect x="12.0" y="12.3" width="6" height="1.6" fill="#f00"/><rect x="20.0" y="9.4" width="6" height="1.6" fill="#f00"/><rect x="20.0" y="12.3" width="6" height="1.6" fill="#f00"/><rect x="28.1" y="9.4" width="6" height="1.6" fill="#f00"/><rect x="28.1" y="12.3" width="6" height="1.6" fill="#f00"/><rect x="36.1" y="9.4" width="6" height="1.6" fill="#f00"/><rect x="36.1" y="12.3" width="6" height="1.6" fill="#f00"/><rect x="44.1" y="9.4" width="6" height="1.6" fill="#f00"/><rect x="44.1" y="12.3" width="6" height="1.6" fill="#f00"/><rect x="52.5" y="1.5" width="49" height="6" fill="#181b22" stroke="#fff"/><rect x="64.2" y="2" width="1" height="5" fill="#fff"/><rect x="65" y="2" width="11.2" height="5" fill="#f00"/><rect x="76.2" y="2" width="6.8" height="5" fill="#008000"/><rect x="89.5" y="2" width="1" height="5" fill="#fff"/><rect x="56.0" y="9.4" width="6" height="1.6" fill="#f00"/><rect x="56.0" y="12.3" width="6" height="1.6" fill="#f00"/><rect x="64.0" y="9.4" width="6" height="1.6" fill="#f00"/><rect x="64.0" y="12.3" width="6" height="1.6" fill="#f00"/><rect x="72.1" y="9.4" width="6" height="1.6" fill="#f00"/><rect x="72.1" y="12.3" width="6" height="1.6" fill="#f00"/><rect x="80.2" y="9.4" width="6" height="1.6" fill="#f00"/><rect x="80.2" y="12.3" width="6" height="1.6" fill="#f00"/><rect x="88.2" y="9.4" width="6" height="1.6" fill="#f00"/><rect x="88.2" y="12.3" width="6" height="1.6" fill="#f00"/><rect x="96.2" y="9.4" width="6" height="1.6" fill="#f00"/><rect x="96.2" y="12.3" width="6" height="1.6" fill="#f00"/></svg>
<svg width="16" height="12" viewBox="0 0 16 12" style="position:absolute;left:1239px;top:8px"><rect x="0" y="0" width="16" height="12" rx="2" fill="#7d838f"/><circle cx="8" cy="6" r="1.4" fill="#2a2e36"/><path d="M5.3 3.2 Q3.6 6 5.3 8.8 M10.7 3.2 Q12.4 6 10.7 8.8" stroke="#2a2e36" stroke-width="1.1" fill="none"/></svg>
<i style="left:1259px;top:8px;width:15px;height:12px;line-height:13px;text-align:center;background:#8a909c;color:#e6ecf8;border-radius:2px;font-size:13px">0</i>
<i style="left:1277px">已断开,点此连接</i>
<i style="left:1754px;top:-3px;font-size:12px;color:#ccd4e4;letter-spacing:.3px">7x24</i>
</div>
<div id="foot"><div style="position:absolute;left:267px;top:0;width:48px;height:2px;background:#6a6c5e"></div></div>
<div id="ime" style="position:absolute;left:1415px;top:1014px;width:144px;height:24px;background:#fdfdff;box-shadow:0 0 0 1px #10131a">
<i style="position:absolute;left:13px;top:0;line-height:23px;font-size:16px;font-weight:bold;color:#4a4b5e;font-family:'Liberation Sans','Noto Sans CJK SC',sans-serif">五</i>
<svg width="110" height="24" viewBox="0 0 110 24" style="position:absolute;left:34px;top:0"><g fill="#4a4b5e">
<path d="M11.5 5.5 C15.5 8 16.5 14 12.5 17.5 C9.5 20 5.5 19.5 3 17.2 C7.5 17.8 11.5 14 11.5 5.5 Z"/>
<circle cx="26.5" cy="9" r="1.6" fill="none" stroke="#4a4b5e" stroke-width="1.1"/>
<path d="M32.3 13.2 a1.5 1.5 0 1 1 2.4 1.2 c0 1.6 -1 2.8 -2.4 3.3 l-.3 -.7 c.8 -.5 1.2 -1.1 1.2 -1.9 c-.6 -.3 -.9 -.9 -.9 -1.9 z"/>
<path d="M46.5 6h13a1.5 1.5 0 0 1 1.500 1.500v9a1.500 1.500 0 0 1 -1.500 1.500h-13a1.500 1.500 0 0 1 -1.500 -1.500v-9a1.500 1.500 0 0 1 1.500 -1.500z M46.700 7.700v1.800h1.800v-1.800z m2.900 0v1.800h1.800v-1.800z m2.900 0v1.800h1.800v-1.800z m2.900 0v1.800h1.800v-1.800z M46.700 10.700v1.800h1.800v-1.800z m2.900 0v1.800h1.800v-1.800z m2.900 0v1.800h1.800v-1.800z m2.900 0v1.800h1.800v-1.800z M48.500 14v1.800h9v-1.800z" fill-rule="evenodd"/>
<circle cx="76" cy="8.300" r="3.300"/><path d="M70 15.500 c1.500 -3 4 -3.800 6 -3.800 s4.500 .8 6 3.800 l-1.500 1 v2.200 h-9 v-2.200 z"/>
<circle cx="93" cy="9.300" r="3.100"/><circle cx="100.200" cy="9.300" r="3.100"/><circle cx="93" cy="16.200" r="3.100"/><circle cx="100.200" cy="16.200" r="3.100"/><rect x="93" y="9.300" width="3" height="3"/><rect x="97.200" y="9.300" width="3" height="3"/><rect x="93" y="13.200" width="3" height="3"/><rect x="97.200" y="13.200" width="3" height="3"/><circle cx="100.600" cy="8.800" r="1.100" fill="#fdfdff"/>
</g></svg>
</div>
<svg width="30" height="28" viewBox="0 0 30 28" style="position:absolute;left:1394px;top:1010px"><g transform="rotate(-16 15 14)"><rect x="3" y="3" width="23.500" height="23" rx="3.500" fill="#3cb41e"/><path d="M22 8.600 C14 5.500 7.500 8 7.800 11.300 C8.200 14.600 20.500 13.500 21.300 17 C21.900 20 13.500 22.500 6.800 19.500" stroke="#fff" stroke-width="3.200" fill="none" stroke-linecap="round"/></g></svg>
<svg width="110" height="18" viewBox="0 0 110 18" style="position:absolute;left:1797px;top:1018px">
<g fill="#9ca2ad">
<rect x="1" y="1.700" width="15" height="12.500" rx="2"/>
<path d="M32 1.700h13a1.500 1.500 0 0 1 1.500 1.500v7.500a1.500 1.500 0 0 1 -1.500 1.500h-5v1.300h3v1h-9v-1h3v-1.300h-5a1.500 1.500 0 0 1 -1.500 -1.500v-7.500a1.500 1.500 0 0 1 1.500 -1.500z"/>
<path d="M63.400 1 A8 8 0 0 0 75 12 Z M69.600 6.900 L72.300 4.300 a1.300 1.300 0 1 0 -.6 -.6 L69 6.300 z M64.300 11.300 l2.200 1.600 l1.300 2.900 h-7 z"/>
<circle cx="98.500" cy="8.700" r="7.800"/>
</g>
<g fill="#3a3f49"><path d="M3.500 4.500h1.300v1.300h-1.300z m2.300 0h1.300v1.300h-1.300z m2.300 0h1.300v1.300h-1.300z m2.300 0h1.300v1.300h-1.300z M3.500 7h1.300v1.300h-1.300z m2.300 0h1.300v1.300h-1.300z m2.300 0h1.300v1.300h-1.300z m2.300 0h1.300v1.300h-1.300z M4 10.200h9v1.200h-9z"/>
<path d="M99.800 3.800 L95.500 9.600 h2.800 l-1 4.200 l4.300 -5.800 h-2.800 z"/></g>
<path d="M33 7 h3.500 l1.200 -2 l1.800 4 l1.300 -2 h3.700" stroke="#3a3f49" stroke-width="1" fill="none"/>
</svg>

<div id="dlg">
<div class="tb"><span>条件选股</span><svg width="40" height="22" viewBox="0 0 40 22" style="position:absolute;right:2px;top:0"><path d="M6.5 9.5H17" stroke="#f4d6d8" stroke-width="1"/><path d="M27.5 5.5L36.5 14.5M36.5 5.5L27.5 14.5" stroke="#f4d6d8" stroke-width="1"/></svg></div>
<span class="t" style="left:6px;top:34px">条件选股公式</span>
<div class="cb" style="left:85px;top:31px;width:283px;height:24px">异动捉牛XG&nbsp;&nbsp;&nbsp;-</div>
<div class="btn" style="left:373px;top:30px;width:42px">查找</div>
<div class="btn" style="left:420px;top:30px;width:57px">用法注释</div>
<div class="btn" style="left:481px;top:30px;width:57px">查看公式</div>
<div class="gb" style="left:5px;top:67px;width:209px;height:201px"><span>计算参数</span></div>
<span class="t" style="left:10px;top:93px">无参数需要设置</span>
<span class="t" style="left:13px;top:242px">选股周期:</span>
<div class="cb" style="left:73px;top:238px;width:128px;height:25px;line-height:24px">日线</div>
<div class="gb" style="left:5px;top:280px;width:209px;height:144px"><span>选股范围</span></div>
<span class="t" style="left:10px;top:295px">上证<b style="padding:0 2px">A</b>股 深证<b style="padding:0 2px">A</b>股</span>
<div class="btn" style="left:139px;top:289px;width:63px">改变范围</div>
<div class="btn" style="left:223px;top:73px;width:66px">加入条件</div>
<div class="btn" style="left:223px;top:111px;width:66px">删除条件</div>
<div class="btn" style="left:223px;top:184px;width:66px">引入方案</div>
<div class="btn" style="left:223px;top:222px;width:66px">保存方案</div>
<span class="t" style="left:303px;top:58px">选股条件列表</span>
<div style="position:absolute;box-sizing:border-box;left:301px;top:75px;width:236px;height:174px;background:#fff;border:1px solid #a0a0a0"><div style="position:absolute;left:1px;top:2px;width:232px;height:18px;background:#0078d7;color:#fff;line-height:18px;padding-left:2px;box-sizing:border-box;white-space:nowrap">异动捉牛XG&nbsp;&nbsp;<b style="margin-left:6px">日线</b></div></div>
<div class="rd" style="left:302px;top:256px"><b style="position:absolute;left:3px;top:3px;width:4px;height:4px;border-radius:50%;background:#8a8a8a"></b></div>
<span class="t" style="left:320px;top:255px;color:#a2a2a2">全部条件相与</span>
<div class="rd" style="left:445px;top:256px"></div>
<span class="t" style="left:462px;top:255px;color:#a2a2a2">全部条件相或</span>
<span class="t" style="left:474px;top:276px;color:#e60000">选股完毕.</span>
<div class="ck" style="left:223px;top:298px"></div>
<span class="t" style="left:241px;top:297px">使用涨跌不定周期</span>
<div class="sk" style="left:343px;top:298px;width:194px"></div>
<span class="t" style="left:342px;top:321px">品种数</span>
<div class="sk" style="left:380px;top:321px;width:42px">5050</div>
<span class="t" style="left:427px;top:321px">选中数</span>
<div class="sk" style="left:465px;top:321px;width:72px">144/2.9%</div>
<div class="ck" style="left:223px;top:349px"><svg width="11" height="11" viewBox="0 0 11 11" style="position:absolute;left:0;top:0"><path d="M2 5.5L4.5 8L9 2.5" stroke="#1a9a1a" stroke-width="1.6" fill="none"/></svg></div>
<span class="t" style="left:241px;top:348px">前复权数据</span>
<div class="ck" style="left:310px;top:349px"></div>
<span class="t" style="left:328px;top:348px">剔除当前未交易的品种</span>
<div class="ck" style="left:457px;top:349px"></div>
<span class="t" style="left:475px;top:348px">剔除ST品种</span>
<div class="ck" style="left:223px;top:378px"></div>
<span class="t" style="left:241px;top:377px">时间段内满足条件</span>
<div class="btn" style="left:385px;top:372px;width:72px">选股入板块</div>
<div class="btn" style="left:471px;top:372px;width:66px">执行选股</div>
<div class="btn" style="left:471px;top:399px;width:66px">关闭</div>
</div>
</body>
</html>
